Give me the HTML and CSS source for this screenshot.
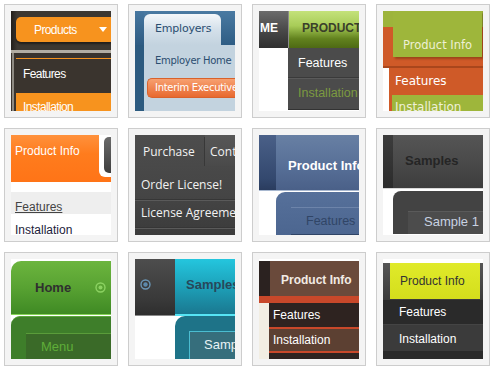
FILE: index.html
```html
<html lang="en">
<head>
    <meta charset="UTF-8">
    <title>Menu Styles</title>
    <link rel="stylesheet" href="styles.css">
</head>
<body>
    <div class="gallery">
        <div class="tile">
            <div class="thumb t1">
                <div class="t1-bar"><div class="t1-btn"><span>Products</span><i class="t1-arrow"></i></div></div>
                <div class="t1-sub">
                    <div class="t1-item t1-first">Features</div>
                    <div class="t1-item t1-on">Installation</div>
                </div>
            </div>
        </div>
        <div class="tile">
            <div class="thumb t2">
                <div class="t2-side"></div>
                <div class="t2-main">
                    <div class="t2-head"><div class="t2-tab">Employers</div></div>
                    <div class="t2-panel">
                        <div class="t2-link">Employer Home</div>
                        <div class="t2-pill">Interim Executive</div>
                    </div>
                </div>
            </div>
        </div>
        <div class="tile">
            <div class="thumb t3">
                <div class="t3-top"><div class="t3-me">ME</div><div class="t3-prod">PRODUCT</div></div>
                <div class="t3-body">
                    <div class="t3-gap"></div>
                    <div class="t3-drop">
                        <div class="t3-item">Features</div>
                        <div class="t3-item t3-dim">Installation</div>
                    </div>
                </div>
            </div>
        </div>
        <div class="tile">
            <div class="thumb t4">
                <div class="t4-top"><div class="t4-blk">Product Info</div></div>
                <div class="t4-sub">
                    <div class="t4-item">Features</div>
                    <div class="t4-item t4-alt">Installation</div>
                </div>
            </div>
        </div>

        <div class="tile">
            <div class="thumb t5">
                <div class="t5-top"><div class="t5-label">Product Info</div><div class="t5-tab"><div class="t5-tab-in"></div></div></div>
                <div class="t5-row t5-link">Features</div>
                <div class="t5-row">Installation</div>
            </div>
        </div>
        <div class="tile">
            <div class="thumb t6">
                <div class="t6-top"><div class="t6-tab">Purchase</div><div class="t6-tab2">Contact</div></div>
                <div class="t6-item">Order License!</div>
                <div class="t6-item t6-second">License Agreement</div>
            </div>
        </div>
        <div class="tile">
            <div class="thumb t7">
                <div class="t7-top"><div class="t7-edge"></div><div class="t7-title">Product Info</div></div>
                <div class="t7-body">
                    <div class="t7-gap"></div>
                    <div class="t7-drop"><div class="t7-item">Features</div></div>
                </div>
            </div>
        </div>
        <div class="tile">
            <div class="thumb t8">
                <div class="t8-top"><div class="t8-edge"></div><div class="t8-title">Samples</div></div>
                <div class="t8-drop"><div class="t8-item">Sample 1</div></div>
            </div>
        </div>

        <div class="tile">
            <div class="thumb t9">
                <div class="t9-top">
                    <span class="t9-label">Home</span>
                    <svg width="11" height="11" viewBox="0 0 11 11"><circle cx="5.5" cy="5.5" r="4.5" fill="none" stroke="#8cd262" stroke-width="1.4"/><circle cx="5.5" cy="5.5" r="2" fill="#8cd262"/></svg>
                </div>
                <div class="t9-drop"><div class="t9-item">Menu</div></div>
            </div>
        </div>
        <div class="tile">
            <div class="thumb t10">
                <div class="t10-top">
                    <div class="t10-side">
                        <svg width="11" height="11" viewBox="0 0 11 11"><circle cx="5.5" cy="5.5" r="4.5" fill="#3a3a3a" stroke="#6a96b6" stroke-width="1.4"/><circle cx="5.5" cy="5.5" r="2.2" fill="#5d8aac"/></svg>
                    </div>
                    <div class="t10-title">Samples</div>
                </div>
                <div class="t10-body">
                    <div class="t10-gap"></div>
                    <div class="t10-drop"><div class="t10-item">Samples</div></div>
                </div>
            </div>
        </div>
        <div class="tile">
            <div class="thumb t11">
                <div class="t11-top"><div class="t11-edge"></div><div class="t11-title">Product Info</div></div>
                <div class="t11-stripe"></div>
                <div class="t11-body">
                    <div class="t11-gap"></div>
                    <div class="t11-drop">
                        <div class="t11-item">Features</div>
                        <div class="t11-item t11-alt">Installation</div>
                    </div>
                </div>
            </div>
        </div>
        <div class="tile">
            <div class="thumb t12">
                <div class="t12-top"><div class="t12-blk">Product Info</div></div>
                <div class="t12-drop">
                    <div class="t12-item">Features</div>
                    <div class="t12-item t12-alt">Installation</div>
                </div>
            </div>
        </div>
    </div>
</body>
</html>
```

FILE: styles.css
```css
body {
    margin: 0;
    background: #fff;
}
.gallery {
    display: grid;
    grid-template-columns: repeat(4, 114px);
    gap: 10px;
    padding: 4px;
}
.tile {
    border: 1px solid #cdcdcd;
    padding: 6px;
    background: #f4f4f4;
}
.thumb {
    width: 100px;
    height: 100px;
    overflow: hidden;
    background: #fff;
    font-family: "Liberation Sans", Arial, sans-serif;
    font-size: 12px;
    white-space: nowrap;
    box-sizing: border-box;
}
.thumb div {
    box-sizing: border-box;
}
/* side pieces keep their width, the rest takes what is left */
.t2-side, .t3-me, .t3-gap, .t5-tab, .t6-tab, .t7-edge, .t7-gap,
.t8-edge, .t10-side, .t10-gap, .t11-edge, .t11-gap {
    flex-shrink: 0;
}
.t2-main, .t3-prod, .t3-drop, .t5-label, .t6-tab2, .t7-title, .t7-drop,
.t8-title, .t10-title, .t10-drop, .t11-title, .t11-drop {
    min-width: 0;
    overflow: hidden;
}

/* 1 - orange products */
.t1 {
    background: #3a342e;
}
.t1-bar {
    height: 42px;
    padding: 6px 0 0 5px;
    background: linear-gradient(to right, #221e1a, #3c3731 6px);
    border-bottom: 3px solid #b3aea4;
}
.t1-btn {
    height: 25px;
    display: flex;
    align-items: center;
    padding-left: 18px;
    background: #f7931e;
    border-radius: 5px 0 0 5px;
    box-shadow: 0 2px 2px rgba(0,0,0,.45);
    color: #fff;
    letter-spacing: -0.6px;
}
.t1-arrow {
    width: 0;
    height: 0;
    margin-left: auto;
    margin-right: 4px;
    border-top: 5px solid #fff;
    border-left: 4.5px solid transparent;
    border-right: 4.5px solid transparent;
}
.t1-sub {
    margin-left: 1px;
    padding: 5px 0 0 2px;
    border-left: 2px solid #8e8a82;
    height: 58px;
}
.t1-item {
    padding-left: 7px;
    color: #fff;
    letter-spacing: -0.6px;
}
.t1-first {
    border-top: 1px solid #f7931e;
    height: 35px;
    line-height: 30px;
}
.t1-on {
    background: #f7931e;
    line-height: 28px;
}

/* 2 - blue employers */
.t2 {
    display: flex;
    background: #2d5a80;
    font-family: "DejaVu Sans", Verdana, sans-serif;
    font-size: 10px;
    letter-spacing: -0.3px;
}
.t2-side {
    width: 9px;
    background: linear-gradient(#4777a0, #2e5b82 34px, #2c5a7f 34px);
}
.t2-main {
    flex: 1;
    display: flex;
    flex-direction: column;
}
.t2-head {
    height: 34px;
    flex-shrink: 0;
    display: flex;
    align-items: flex-end;
    background: linear-gradient(#4a7aa2, #2f5d84);
}
.t2-tab {
    width: 77px;
    height: 31px;
    padding-left: 11px;
    line-height: 30px;
    border-radius: 6px 6px 0 0;
    background: linear-gradient(#f4f7fa, #d4e0ea 50%, #c3d3df);
    color: #2b4e70;
    font-size: 11px;
    letter-spacing: -0.2px;
}
.t2-panel {
    flex: 1;
    padding-top: 7px;
    background: #c3d3df;
}
.t2-link {
    padding-left: 11px;
    line-height: 18px;
    color: #2b4e70;
}
.t2-pill {
    margin: 8px 0 0 3px;
    height: 20px;
    padding-left: 7px;
    line-height: 18px;
    border: 1px solid #d8622c;
    border-right: none;
    border-radius: 5px 0 0 5px;
    background: linear-gradient(#f7a070, #e8692f);
    color: #fff;
}

/* 3 - green product */
.t3-top {
    display: flex;
    height: 37px;
}
.t3-me {
    width: 30px;
    padding-left: 1px;
    line-height: 34px;
    background: linear-gradient(#6c6c6c, #4a4a4a 50%, #2f2f2f);
    border-right: 1px solid #8a8a8a;
    color: #fff;
    font-weight: bold;
}
.t3-prod {
    flex: 1;
    padding-left: 13px;
    line-height: 34px;
    background: linear-gradient(#c4e27a, #a8cc58 40%, #62821e 75%, #4e6a14);
    color: #3a3f2a;
    font-weight: bold;
}
.t3-body {
    display: flex;
    height: 63px;
}
.t3-gap {
    width: 29px;
}
.t3-drop {
    flex: 1;
    height: 62px;
    background: #4b4b4b;
    border-bottom: 1px solid #333;
}
.t3-item {
    height: 29px;
    padding-left: 10px;
    line-height: 30px;
    color: #fff;
    font-size: 12.5px;
}
.t3-dim {
    color: #7c9a40;
    border-top: 1px solid #3a3a3a;
    box-shadow: inset 0 1px #5a5a5a;
}

/* 4 - olive and rust */
.t4 {
    font-family: "DejaVu Sans", Verdana, sans-serif;
    font-size: 11.5px;
}
.t4-top {
    height: 57px;
    padding-left: 10px;
    background: linear-gradient(#9db43b 16px, #cf5a28 16px);
    border-bottom: 2px solid #a9461c;
}
.t4-blk {
    width: 89px;
    height: 46px;
    padding: 26px 0 0 10px;
    line-height: 16px;
    background: #9eb63b;
    box-shadow: 2px 2px 2px rgba(60,30,0,.35);
    color: #eef0d4;
}
.t4-sub {
    margin-left: 6px;
    height: 43px;
    background: #cf5a28;
}
.t4-item {
    height: 25px;
    padding-left: 6px;
    line-height: 26px;
    color: #fff;
    font-size: 12px;
}
.t4-alt {
    margin: 2px 0 0 3px;
    padding-left: 3px;
    line-height: 24px;
    background: #9eb63b;
    color: #eef0d8;
}

/* 5 - tangerine */
.t5-top {
    height: 47px;
    display: flex;
    align-items: flex-start;
    background: linear-gradient(#ff913c, #ff7c1d 40%, #ff7417);
}
.t5-label {
    flex: 1;
    padding: 8px 0 0 4px;
    line-height: 16px;
    color: #fff;
}
.t5-tab {
    width: 12px;
    height: 42px;
    padding: 2px 0 4px 5px;
    background: #fff;
    border-radius: 0 0 0 6px;
}
.t5-tab-in {
    height: 100%;
    background: linear-gradient(#6a6a6a, #3e3e3e);
    border-radius: 5px 0 0 5px;
}
.t5-row {
    height: 22px;
    padding: 9px 0 0 4px;
    line-height: 14px;
    color: #1c1c3a;
}
.t5-link {
    margin-top: 10px;
    padding-top: 8px;
    background: #eee;
    color: #444;
    text-decoration: underline;
}

/* 6 - dark purchase */
.t6 {
    background: linear-gradient(#4d4d4d, #454545 60%, #3b3b3b);
    font-family: "Open Sans", sans-serif;
    font-size: 12px;
    color: #f2f2f2;
}
.t6-top {
    display: flex;
    height: 31px;
    padding-top: 2px;
    line-height: 30px;
}
.t6-tab {
    width: 70px;
    padding-left: 8px;
    border-right: 1px solid #383838;
    box-shadow: 1px 0 #5c5c5c;
}
.t6-tab2 {
    flex: 1;
    margin-top: -2px;
    padding: 2px 0 0 5px;
    background: linear-gradient(#575757, #4a4a4a);
}
.t6-item {
    height: 34px;
    padding: 5px 0 0 6px;
    line-height: 28px;
    border-bottom: 1px solid #363636;
    box-shadow: 0 1px #5a5a5a;
}
.t6-second {
    margin-top: 1px;
    height: 27px;
    padding-top: 0;
    line-height: 24px;
}

/* 7 - steel blue */
.t7-top {
    display: flex;
    height: 56px;
    border-bottom: 1px solid #a8b8d0;
}
.t7-edge {
    width: 17px;
    background: linear-gradient(#4a6088, #33486e 80%, #2a3c5e);
}
.t7-title {
    flex: 1;
    padding: 22px 0 0 12px;
    line-height: 18px;
    background: linear-gradient(#6880a4, #566e96 60%, #4a6088);
    color: #fff;
    font-weight: bold;
    font-size: 13px;
}
.t7-body {
    display: flex;
    margin-top: 1px;
    height: 43px;
}
.t7-gap {
    width: 17px;
}
.t7-drop {
    flex: 1;
    padding: 15px 0 0 15px;
    background: linear-gradient(#56709a, #4c6690);
    border-radius: 9px 0 0 0;
}
.t7-item {
    height: 28px;
    padding-left: 15px;
    line-height: 26px;
    border-top: 1px solid #6d84aa;
    border-bottom: 1px solid #2f4466;
    color: #304566;
    font-size: 12.5px;
}

/* 8 - graphite */
.t8-top {
    display: flex;
    height: 54px;
    border-bottom: 1px solid #d8d8d8;
}
.t8-edge {
    width: 10px;
    background: linear-gradient(#3c3c3c, #2c2c2c);
}
.t8-title {
    flex: 1;
    padding: 17px 0 0 12px;
    line-height: 18px;
    background: linear-gradient(#555, #4a4a4a 50%, #3d3d3d);
    color: #252525;
    font-weight: bold;
    font-size: 13px;
}
.t8-drop {
    margin: 2px 0 0 10px;
    height: 43px;
    padding: 20px 0 0 15px;
    background: #434343;
    border-radius: 8px 0 0 0;
}
.t8-item {
    height: 23px;
    padding-left: 16px;
    line-height: 19px;
    border-top: 1px solid #5a5a5a;
    background: #4c4c4c;
    color: #c8d2e2;
    font-size: 13px;
}

/* 9 - lime home */
.t9-top {
    display: flex;
    align-items: center;
    margin-top: 2px;
    height: 54px;
    padding: 0 5px 0 24px;
    border-radius: 10px 0 0 0;
    background: linear-gradient(#6cb53e, #58a232 50%, #3f8a24);
    border-bottom: 1px solid #86d456;
}
.t9-label {
    flex: 1;
    color: #2f2f2f;
    font-weight: bold;
    font-size: 13px;
}
.t9-drop {
    margin-top: 1px;
    height: 43px;
    padding: 16px 0 0 15px;
    background: #3e7e2a;
    border-top: 1px solid #5aa83a;
    border-radius: 9px 0 0 0;
}
.t9-item {
    height: 30px;
    padding-left: 15px;
    line-height: 26px;
    border-top: 1px solid #5a9c3a;
    background: #3a6a28;
    color: #5fae38;
    font-size: 13px;
}

/* 10 - teal samples */
.t10-top {
    display: flex;
    height: 57px;
}
.t10-side {
    width: 40px;
    display: flex;
    align-items: center;
    padding: 0 0 5px 5px;
    background: linear-gradient(#4d4d4d, #3a3a3a 70%, #2e2e2e);
    border-bottom: 1px solid #8a8a8a;
}
.t10-side svg {
    display: block;
}
.t10-title {
    flex: 1;
    padding: 17px 0 0 11px;
    line-height: 18px;
    background: linear-gradient(#24c6de, #1ea8c0 40%, #1a7890);
    border-bottom: 2px solid #56e4f4;
    color: #27485a;
    font-weight: bold;
    font-size: 13px;
}
.t10-body {
    display: flex;
    height: 43px;
}
.t10-gap {
    width: 40px;
}
.t10-drop {
    flex: 1;
    padding: 15px 0 0 14px;
    background: #1e7388;
    border-radius: 10px 0 0 0;
}
.t10-item {
    height: 28px;
    padding-left: 14px;
    line-height: 26px;
    border-top: 1px solid #4bbcd0;
    border-left: 1px solid #4bbcd0;
    background: #366e7c;
    color: #e8f2f4;
    font-size: 13px;
}

/* 11 - brown */
.t11-top {
    display: flex;
    margin-top: 2px;
    height: 35px;
}
.t11-edge {
    width: 11px;
    background: #2b2220;
}
.t11-title {
    flex: 1;
    padding: 2px 0 0 11px;
    line-height: 34px;
    background: #6a4a3b;
    color: #f2ebe4;
    font-weight: bold;
}
.t11-stripe {
    height: 7px;
    background: #c8482a;
}
.t11-body {
    display: flex;
    height: 56px;
}
.t11-gap {
    width: 10px;
    background: #f2eee3;
}
.t11-drop {
    flex: 1;
    background: #2e2320;
}
.t11-item {
    height: 26px;
    padding-left: 4px;
    line-height: 24px;
    border-bottom: 2px solid #c8482a;
    color: #fff;
}
.t11-alt {
    height: 24px;
    line-height: 22px;
    background: #5c4032;
}

/* 12 - yellow */
.t12-top {
    margin-top: 4px;
    height: 37px;
    padding: 0 3px 1px 7px;
    background: linear-gradient(#555, #3a3a3a);
}
.t12-blk {
    height: 36px;
    padding-left: 10px;
    line-height: 36px;
    background: linear-gradient(#e0ea2a, #d4de1c);
    color: #333;
}
.t12-drop {
    height: 59px;
    background: #2a2a2a;
}
.t12-item {
    height: 24px;
    padding-left: 16px;
    line-height: 24px;
    color: #fff;
}
.t12-alt {
    height: 27px;
    line-height: 28px;
    border-top: 1px solid #444;
    background: #3b3b3b;
}
```
